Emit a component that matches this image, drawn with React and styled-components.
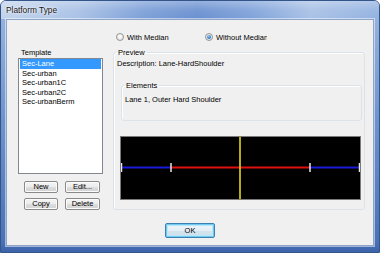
import React from "react";
import styled, { createGlobalStyle } from "styled-components";

const Global = createGlobalStyle`
  *, *::before, *::after { box-sizing: border-box; }
  html, body { margin: 0; padding: 0; background: #ffffff; }
  body { font-family: "Liberation Sans", Arial, sans-serif; }
`;

const Window = styled.div`
  width: 380px;
  height: 253px;
  display: flex;
  flex-direction: column;
  padding: 0 5px 6px 5px;
  border: 1px solid #34558a;
  border-radius: 6px 6px 0 0;
  background: linear-gradient(180deg, #b2c8e8 0px, #93b1de 20px, #6e93cc 120px, #4a72b6 240px, #3a61a8 253px);
  overflow: hidden;
`;

const TitleBar = styled.div`
  height: 18px;
  margin: 0 -5px;
  padding-left: 5px;
  display: flex;
  align-items: center;
  font-size: 8.3px;
  color: #141414;
  text-shadow: 0 0 4px #ffffff, 0 0 2px #ffffff;
  background:
    linear-gradient(180deg, rgba(255,255,255,0.3) 0%, rgba(255,255,255,0.08) 50%, rgba(255,255,255,0) 100%),
    linear-gradient(90deg, #c2d3ec 0%, #aac2e6 20%, #7c9fd8 38%, #6a90d0 52%, #7fa2da 66%, #a9c1e6 82%, #93b2e0 100%);
`;

const Client = styled.div`
  flex: 1;
  display: flex;
  flex-direction: column;
  padding-top: 11px;
  background: #f0f0f0;
  border: 1px solid #8ea5c7;
  box-shadow: 0 0 0 1px rgba(255,255,255,0.5);
  font-size: 7.5px;
  color: #000;
`;

const RadioRow = styled.div`
  display: flex;
  align-items: center;
  height: 12px;
  margin-left: 109px;
`;

const RadioOption = styled.label`
  display: flex;
  align-items: center;
  gap: 3px;
  width: ${p => p.$w}px;
  overflow: hidden;
  white-space: nowrap;
`;

const RadioCircle = styled.span`
  flex: none;
  width: 8px;
  height: 8px;
  border-radius: 50%;
  border: 1px solid #959595;
  background: radial-gradient(circle at 50% 40%, #ffffff 0%, #e6e6e6 70%, #d4d4d4 100%);
  display: flex;
  align-items: center;
  justify-content: center;
  &::after {
    content: "";
    width: 4px;
    height: 4px;
    border-radius: 50%;
    background: ${p => (p.$on ? "radial-gradient(circle at 40% 35%, #8fd0f7 0%, #2f7bc4 60%, #1d5fa5 100%)" : "transparent")};
  }
`;

const MainRow = styled.div`
  display: flex;
  gap: 10px;
  margin-top: 4px;
  padding-left: 11px;
`;

const LeftCol = styled.div`
  width: 85px;
  display: flex;
  flex-direction: column;
`;

const FieldLabel = styled.div`
  line-height: 11px;
  height: 11px;
  padding-left: 3px;
`;

const ListBox = styled.div`
  height: 116px;
  border: 1px solid #828790;
  background: #ffffff;
  padding: 0 1px;
`;

const ListItem = styled.div`
  height: 9.5px;
  line-height: 9.5px;
  padding-left: 2px;
  white-space: nowrap;
  background: ${p => (p.$sel ? "#3399ff" : "transparent")};
  color: ${p => (p.$sel ? "#ffffff" : "#000000")};
`;

const ButtonGrid = styled.div`
  display: grid;
  grid-template-columns: 34px 35px;
  grid-auto-rows: 12px;
  column-gap: 7px;
  row-gap: 5px;
  margin-top: 7px;
  padding-left: 6px;
`;

const Button = styled.button`
  font-family: inherit;
  font-size: 7.5px;
  color: #000;
  padding: 0;
  margin: 0;
  border: 1px solid #8a8a8a;
  border-radius: 2px;
  background: linear-gradient(180deg, #f4f4f4 0%, #ececec 50%, #dedede 50%, #d2d2d2 100%);
  box-shadow: inset 0 0 0 1px #fbfbfb;
  line-height: 10px;
`;

const OkButton = styled(Button)`
  width: 50px;
  height: 15px;
  border-color: #3c7fb1;
  box-shadow: inset 0 0 0 1px #6fcaf2, inset 0 0 0 2px #b9e6f9;
  background: linear-gradient(180deg, #eef6fb 0%, #e4eef5 50%, #d4e4ee 50%, #cfe0ec 100%);
`;

const GroupBox = styled.fieldset`
  margin: 0;
  min-width: 0;
  width: ${p => p.$w}px;
  height: ${p => p.$h}px;
  padding: 0;
  border: 1px solid #dce3e8;
  border-radius: 3px;
  box-shadow: inset 1px 1px 0 #ffffff;
  display: flex;
  flex-direction: column;
`;

const Legend = styled.legend`
  margin-left: 2px;
  padding: 0 2px;
  line-height: 11px;
  height: 11px;
  font-size: 7.5px;
`;

const TextLine = styled.div`
  line-height: 11px;
  height: 11px;
  padding-left: ${p => p.$pl || 0}px;
  margin-top: ${p => p.$mt || 0}px;
  white-space: nowrap;
`;

const InnerGroup = styled(GroupBox)`
  margin-left: 7px;
  margin-top: 11px;
`;

const Canvas = styled.div`
  width: 241px;
  height: 64px;
  margin-left: 6px;
  margin-top: 15px;
  background: #000;
  border: 1px solid #7a7a7a;
  display: flex;
`;

const OkRow = styled.div`
  display: flex;
  margin-top: 13px;
  padding-left: 158px;
`;

const templates = ["Sec-Lane", "Sec-urban", "Sec-urban1C", "Sec-urban2C", "Sec-urbanBerm"];

function Preview() {
  return (
    <svg width="239" height="62" viewBox="0 0 239 62">
      <line x1="0" y1="30.5" x2="50" y2="30.5" stroke="#1a1ad8" strokeWidth="2" />
      <line x1="50" y1="30.5" x2="189" y2="30.5" stroke="#e01010" strokeWidth="2" />
      <line x1="189" y1="30.5" x2="239" y2="30.5" stroke="#1a1ad8" strokeWidth="2" />
      <line x1="119" y1="0" x2="119" y2="62" stroke="#f2e22a" strokeWidth="1.5" />
      {[0.5, 50, 189, 238.5].map(x => (
        <line key={x} x1={x} y1="26" x2={x} y2="35" stroke="#e8e8e8" strokeWidth="1.5" />
      ))}
    </svg>
  );
}

export default function App() {
  return (
    <>
      <Global />
      <Window>
        <TitleBar>Platform Type</TitleBar>
        <Client>
          <RadioRow>
            <RadioOption $w={89}>
              <RadioCircle />
              With Median
            </RadioOption>
            <RadioOption $w={62}>
              <RadioCircle $on />
              Without Median
            </RadioOption>
          </RadioRow>
          <MainRow>
            <LeftCol>
              <FieldLabel>Template</FieldLabel>
              <ListBox>
                {templates.map((t, i) => (
                  <ListItem key={t} $sel={i === 0}>{t}</ListItem>
                ))}
              </ListBox>
              <ButtonGrid>
                <Button>New</Button>
                <Button>Edit...</Button>
                <Button>Copy</Button>
                <Button>Delete</Button>
              </ButtonGrid>
            </LeftCol>
            <GroupBox $w={252} $h={163}>
              <Legend>Preview</Legend>
              <TextLine $pl={3}>Description: Lane-HardShoulder</TextLine>
              <InnerGroup $w={241} $h={41}>
                <Legend>Elements</Legend>
                <TextLine $pl={3} $mt={3}>Lane 1, Outer Hard Shoulder</TextLine>
              </InnerGroup>
              <Canvas>
                <Preview />
              </Canvas>
            </GroupBox>
          </MainRow>
          <OkRow>
            <OkButton>OK</OkButton>
          </OkRow>
        </Client>
      </Window>
    </>
  );
}
